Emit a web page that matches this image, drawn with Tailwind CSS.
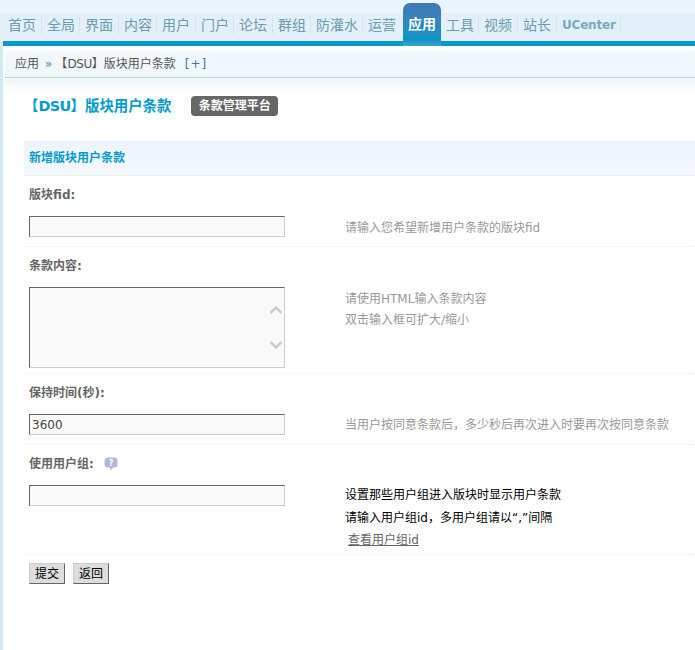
<!doctype html>
<html lang="zh">
<head>
<meta charset="utf-8">
<script src="https://cdn.jsdelivr.net/npm/@tailwindcss/browser@4"></script>
</head>
<body class="bg-white overflow-hidden font-['DejaVu_Sans','Noto_Sans_CJK_SC',sans-serif] text-xs text-[#666]">
<div class="w-[695px] h-[650px] overflow-hidden flex flex-col">
  <header class="h-[46px] shrink-0 bg-[#e3f0fa] flex flex-col">
    <div class="h-[13px] bg-[#eaf4fb]"></div>
    <nav class="h-[33px] flex items-start pl-[3px] text-sm text-[#6b9bb0]">
      <a class="w-[39px] h-[19px] mt-[2px] pl-[5px] flex items-center border-r border-[#d3e4ef]">首页</a>
      <a class="w-[38px] h-[19px] mt-[2px] pl-[5px] flex items-center border-r border-[#d3e4ef]">全局</a>
      <a class="w-[39px] h-[19px] mt-[2px] pl-[5px] flex items-center border-r border-[#d3e4ef]">界面</a>
      <a class="w-[38px] h-[19px] mt-[2px] pl-[5px] flex items-center border-r border-[#d3e4ef]">内容</a>
      <a class="w-[39px] h-[19px] mt-[2px] pl-[5px] flex items-center border-r border-[#d3e4ef]">用户</a>
      <a class="w-[38px] h-[19px] mt-[2px] pl-[5px] flex items-center border-r border-[#d3e4ef]">门户</a>
      <a class="w-[39px] h-[19px] mt-[2px] pl-[5px] flex items-center border-r border-[#d3e4ef]">论坛</a>
      <a class="w-[38px] h-[19px] mt-[2px] pl-[5px] flex items-center border-r border-[#d3e4ef]">群组</a>
      <a class="w-[52px] h-[19px] mt-[2px] pl-[5px] flex items-center border-r border-[#d3e4ef]">防灌水</a>
      <a class="w-[40px] h-[19px] mt-[2px] pl-[5px] flex items-center">运营</a>
      <a class="w-[38px] h-[43px] -mt-[10px] pl-[5px] pb-px rounded-t-[7px] bg-linear-to-b from-[#4279b3] via-[#0a93c9] via-85% to-[#35a6d0] text-white font-bold flex items-center relative z-10">应用</a>
      <a class="w-[38px] h-[19px] mt-[2px] pl-[5px] flex items-center border-r border-[#d3e4ef]">工具</a>
      <a class="w-[39px] h-[19px] mt-[2px] pl-[5px] flex items-center border-r border-[#d3e4ef]">视频</a>
      <a class="w-[39px] h-[19px] mt-[2px] pl-[5px] flex items-center border-r border-[#d3e4ef]">站长</a>
      <a class="w-[64px] h-[19px] mt-[2px] pl-[5px] flex items-center border-r border-[#d3e4ef] text-xs font-bold tracking-[-0.2px] text-[#7ba9bf]">UCenter</a>
    </nav>
  </header>
  <div class="flex-1 flex flex-col border-l-[3px] border-[#d3e8f2] min-h-0">
    <div class="h-[5px] shrink-0 bg-[#049ccf] -mt-[5px] relative z-0"></div>
    <div class="h-[33px] shrink-0 pt-[5px] bg-white">
      <div class="h-[27px] ml-[2px] flex items-center pl-[10px] bg-[#f0f7fd] border-b border-[#b5d3dc] text-[#555]">
        <span>应用</span>
        <span class="mx-[6px] text-[#77778a]">»</span>
        <span class="-ml-[3px]">【<span class="tracking-[-0.4px]">DSU</span>】版块用户条款</span>
        <span class="ml-[9px] text-[#3f74b0] tracking-[1px]">[+]</span>
      </div>
    </div>
    <div class="h-[62px] shrink-0 bg-linear-to-b from-[#eef6fb] to-white to-20% pl-[21px] pb-[8px] flex items-center gap-[20px]">
      <h1 class="text-[14.4px] pt-[2px] font-bold text-[#049ccf]">【<span class="tracking-[-0.6px]">DSU</span>】版块用户条款</h1>
      <span class="h-[20px] w-[87px] rounded-[4px] bg-[#666] text-white font-bold flex items-center justify-center">条款管理平台</span>
    </div>
    <form class="pl-[21px]">
      <h2 class="h-[35px] flex items-center pl-[5px] font-bold text-[#049ccf] bg-linear-to-b from-[#ecf4fd] to-[#f5f9fe] border-b border-dotted border-[#e4f0f8]">新增版块用户条款</h2>

      <div class="h-[36px] pl-[5px] pt-[2px] flex items-center font-bold">版块fid:</div>
      <div class="h-[35px] flex pt-[4px] border-b border-dotted border-[#e4f0f8]">
        <div class="w-[321px] pl-[5px] shrink-0"><input class="block w-[256px] h-[21px] px-[2px] bg-[#f9f9f9] border border-t-[#666] border-l-[#666] border-r-[#ccc] border-b-[#ccc]"></div>
        <p class="leading-[21px] pt-[2px] text-[#999]">请输入您希望新增用户条款的版块fid</p>
      </div>

      <div class="h-[36px] pl-[5px] pt-[2px] flex items-center font-bold">条款内容:</div>
      <div class="h-[91px] flex pt-[4px] border-b border-dotted border-[#e4f0f8]">
        <div class="w-[321px] pl-[5px] shrink-0 relative">
          <textarea class="block w-[256px] h-[81px] bg-[#f9f9f9] border border-t-[#666] border-l-[#666] border-r-[#ccc] border-b-[#ccc] resize-none overflow-hidden"></textarea>
          <svg class="absolute left-[245px] top-[17px]" width="14" height="60" viewBox="0 0 14 60" fill="none" stroke="#ccc" stroke-width="2.5"><path d="M1.5 9 7 3.5 12.5 9"/><path d="M1.5 38 7 43.5 12.5 38"/></svg>
        </div>
        <div class="leading-[21px] pt-[2px] text-[#999]"><p>请使用HTML输入条款内容</p><p>双击输入框可扩大/缩小</p></div>
      </div>

      <div class="h-[36px] pl-[5px] pt-[2px] flex items-center font-bold">保持时间(秒):</div>
      <div class="h-[35px] flex pt-[4px] border-b border-dotted border-[#e4f0f8]">
        <div class="w-[321px] pl-[5px] shrink-0"><input value="3600" class="block w-[256px] h-[21px] px-[2px] text-[#444] bg-[#f9f9f9] border border-t-[#666] border-l-[#666] border-r-[#ccc] border-b-[#ccc]"></div>
        <p class="leading-[21px] pt-[1px] text-[#999]">当用户按同意条款后，多少秒后再次进入时要再次按同意条款</p>
      </div>

      <div class="h-[36px] pl-[5px] pt-[2px] flex items-center font-bold">
        <span>使用用户组:</span>
        <svg class="ml-[10px]" width="14" height="14" viewBox="0 0 14 14"><path d="M4 .5h6A3.5 3.5 0 0 1 13.500 4v3A3.500 3.500 0 0 1 10 10.500H9L6.500 13.500 6 10.500H4A3.500 3.500 0 0 1 .5 7V4A3.500 3.500 0 0 1 4 .5Z" fill="#afb6e4"/><text x="7" y="8.500" text-anchor="middle" font-size="8" font-weight="700" fill="#fff">?</text></svg>
      </div>
      <div class="h-[74px] flex pt-[4px] border-b border-dotted border-[#e4f0f8]">
        <div class="w-[321px] pl-[5px] shrink-0"><input class="block w-[256px] h-[21px] px-[2px] bg-[#f9f9f9] border border-t-[#666] border-l-[#666] border-r-[#ccc] border-b-[#ccc]"></div>
        <div class="leading-[22.500px] -mt-px text-black">
          <p>设置那些用户组进入版块时显示用户条款</p>
          <p>请输入用户组id，多用户组请以“,”间隔</p>
          <p><a class="ml-[3px] underline text-[#666]">查看用户组id</a></p>
        </div>
      </div>

      <div class="pl-[5px] pt-[8px] flex gap-[8px]">
        <button type="button" class="w-[36px] h-[21px] bg-[#ddd] text-black border border-t-[#ccc] border-l-[#ccc] border-r-[#666] border-b-[#666]">提交</button>
        <button type="button" class="w-[36px] h-[21px] bg-[#ddd] text-black border border-t-[#ccc] border-l-[#ccc] border-r-[#666] border-b-[#666]">返回</button>
      </div>
    </form>
  </div>
</div>
</body>
</html>
